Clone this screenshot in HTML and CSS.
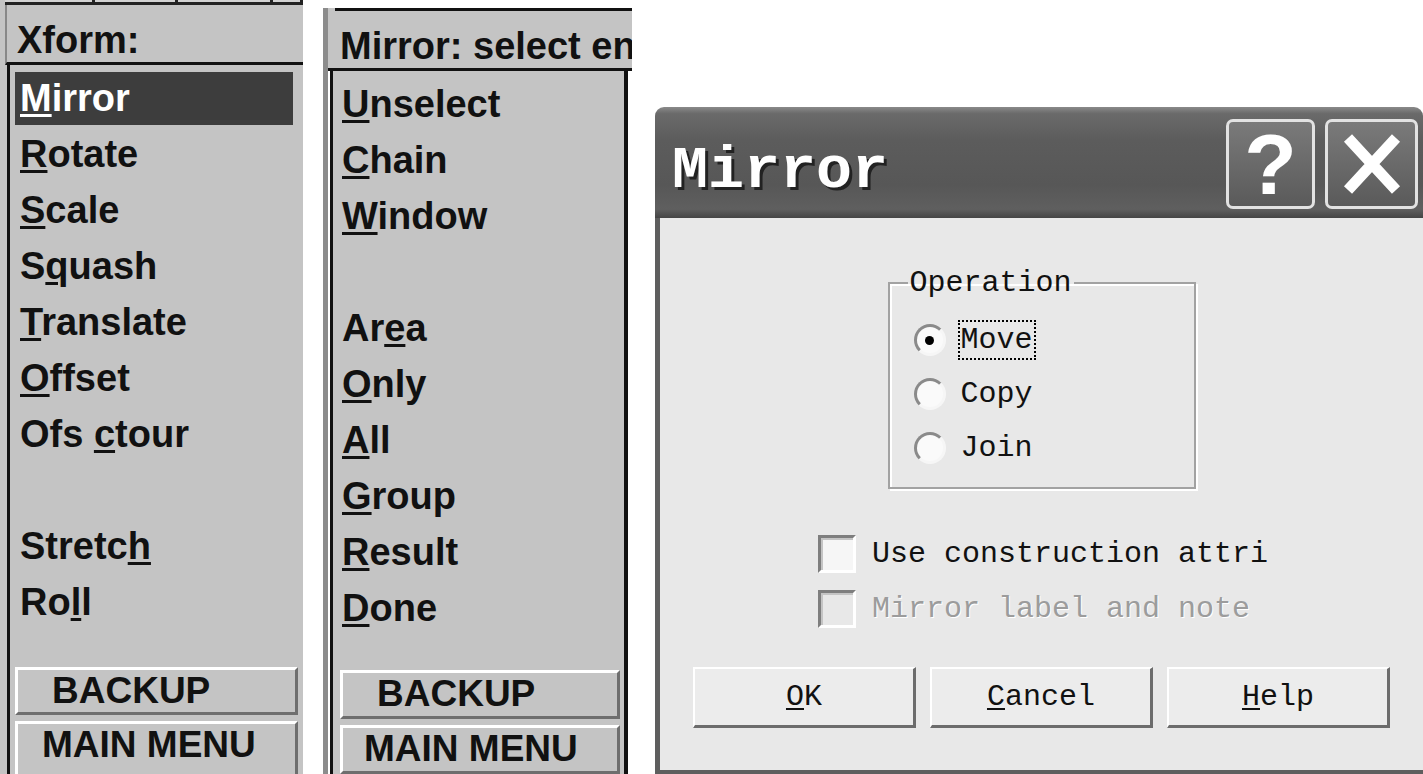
FILE: index.html
```html
<!DOCTYPE html>
<html>
<head>
  <title>Xform - Mirror</title>
  <meta charset="utf-8">
  <link rel="stylesheet" href="styles.css">
</head>
<body>
  <div id="screen">
    <!-- Xform menu -->
    <div class="panel panel-xform">
      <div class="tabs"><span></span><span></span><span></span><span></span></div>
      <div class="panel-title">Xform:</div>
      <div class="menu-box">
        <div class="item selected"><u>M</u>irror</div>
        <div class="item"><u>R</u>otate</div>
        <div class="item"><u>S</u>cale</div>
        <div class="item">S<u>q</u>uash</div>
        <div class="item"><u>T</u>ranslate</div>
        <div class="item"><u>O</u>ffset</div>
        <div class="item">Ofs <u>c</u>tour</div>
        <div class="item"></div>
        <div class="item">Stretc<u>h</u></div>
        <div class="item">Ro<u>l</u>l</div>
        <div class="menu-buttons">
          <div class="menu-btn btn-backup">BACKUP</div>
          <div class="menu-btn btn-main">MAIN MENU</div>
        </div>
      </div>
    </div>

    <!-- Mirror select menu -->
    <div class="panel panel-select">
      <div class="topline"></div>
      <div class="panel-title">Mirror: select entities</div>
      <div class="menu-box">
        <div class="item"><u>U</u>nselect</div>
        <div class="item"><u>C</u>hain</div>
        <div class="item"><u>W</u>indow</div>
        <div class="item"></div>
        <div class="item">Ar<u>e</u>a</div>
        <div class="item"><u>O</u>nly</div>
        <div class="item"><u>A</u>ll</div>
        <div class="item"><u>G</u>roup</div>
        <div class="item"><u>R</u>esult</div>
        <div class="item"><u>D</u>one</div>
        <div class="menu-buttons">
          <div class="menu-btn btn-backup">BACKUP</div>
          <div class="menu-btn btn-main">MAIN MENU</div>
        </div>
      </div>
    </div>

    <!-- Mirror dialog -->
    <div class="dialog">
      <div class="titlebar">
        <div class="title">Mirror</div>
        <div class="cap-btn cap-help">?</div>
        <div class="cap-btn cap-close">
          <svg width="60" height="62" viewBox="0 0 60 62">
            <path d="M6 5 L54 57 M54 5 L6 57" stroke="#fff" stroke-width="11" fill="none"/>
          </svg>
        </div>
      </div>
      <div class="dialog-body">
        <fieldset class="group">
          <legend>Operation</legend>
          <div class="radio-row"><span class="radio on"></span><span class="label focus">Move</span></div>
          <div class="radio-row"><span class="radio"></span><span class="label">Copy</span></div>
          <div class="radio-row"><span class="radio"></span><span class="label">Join</span></div>
        </fieldset>
        <div class="check-row"><span class="check"></span><span>Use construction attri</span></div>
        <div class="check-row disabled"><span class="check"></span><span>Mirror label and note</span></div>
        <div class="dlg-buttons">
          <div class="dlg-btn"><u>O</u>K</div>
          <div class="dlg-btn"><u>C</u>ancel</div>
          <div class="dlg-btn"><u>H</u>elp</div>
        </div>
      </div>
    </div>
  </div>
</body>
</html>
```

FILE: styles.css
```css
* {
  box-sizing: border-box;
}
body {
  margin: 0;
  background-color: #fff;
  font-family: "Liberation Sans", Arial, sans-serif;
  color: #111;
  overflow: hidden;
}
#screen {
  display: flex;
  width: 1423px;
  height: 774px;
  overflow: hidden;
}

/* left side menus */
.panel {
  flex-shrink: 0;
  display: flex;
  flex-direction: column;
  overflow: hidden;
}
.panel > * {
  flex-shrink: 0;
}
.panel-xform {
  width: 303px;
  padding-left: 5px;
  background-color: #c4c4c4;
}
.panel-select {
  width: 309px;
  margin: 8px 0 0 20px;
  border-left: 5px solid #8c8c8c;
  background-color: #fff;
}
.tabs {
  display: grid;
  grid-template-columns: 90px 83px 95px 1fr;
  height: 5px;
}
.tabs span {
  background-color: #d2d2d2;
  border-right: 3px solid #222;
  border-bottom: 3px solid #222;
}
.topline {
  height: 3px;
  background: linear-gradient(to right, #c4c4c4 7px, #111 7px);
}
.panel-title {
  height: 60px;
  padding: 14px 0 0 10px;
  font-size: 38px;
  font-weight: bold;
  line-height: 43px;
  white-space: nowrap;
  overflow: hidden;
  background-color: #c4c4c4;
  border-bottom: 3px solid #111;
}
.panel-xform .panel-title {
  border-left: 2px solid #888;
}
.panel-select .panel-title {
  padding-left: 12px;
}
.menu-box {
  flex: 1 0 auto;
  margin-left: 2px;
  padding-top: 7px;
  border-left: 3px solid #111;
  background-color: #c4c4c4;
}
.panel-select .menu-box {
  margin-right: 4px;
  border-right: 4px solid #111;
}
.item {
  height: 53px;
  margin: 0 10px 3px 5px;
  padding-left: 5px;
  font-size: 38px;
  font-weight: bold;
  line-height: 53px;
  white-space: nowrap;
}
.panel-select .item {
  padding-left: 4px;
}
.item u,
.dlg-btn u {
  text-decoration-thickness: 3px;
  text-underline-offset: 3px;
}
.item.selected {
  background-color: #3d3d3d;
  color: #fff;
}
.menu-buttons {
  margin: 38px 5px 0 5px;
}
.panel-select .menu-buttons {
  margin: 35px 4px 0 7px;
}
.menu-btn {
  height: 48px;
  border: 3px solid;
  border-color: #fff #6e6e6e #6e6e6e #fff;
  font-size: 37px;
  font-weight: bold;
  line-height: 42px;
  white-space: nowrap;
}
.panel-select .menu-btn {
  height: 49px;
}
.btn-backup {
  padding-left: 34px;
}
.btn-main {
  height: 60px;
  margin-top: 6px;
  padding-left: 24px;
}
.panel-select .btn-main {
  padding-left: 21px;
}

/* dialog */
.dialog {
  flex-shrink: 0;
  width: 768px;
  margin: 107px 0 0 23px;
  display: flex;
  flex-direction: column;
}
.titlebar {
  height: 111px;
  flex-shrink: 0;
  display: flex;
  align-items: flex-start;
  border-radius: 9px 9px 0 0;
  background: linear-gradient(to bottom, #8a8a8a 0%, #6a6a6a 6%, #5c5c5c 30%, #575757 70%, #5f5f5f 92%, #444 100%);
}
.title {
  flex: 1;
  margin: 34px 0 0 17px;
  font-family: "Liberation Mono", "Courier New", monospace;
  font-size: 60px;
  font-weight: bold;
  line-height: 60px;
  color: #fff;
  text-shadow: 3px 3px 0 #222;
}
.cap-btn {
  width: 89px;
  height: 90px;
  margin-top: 12px;
  display: flex;
  align-items: center;
  justify-content: center;
  border: 3px solid #e2e2e2;
  border-radius: 7px;
  background: linear-gradient(to bottom, #7a7a7a, #5a5a5a);
  color: #fff;
}
.cap-help {
  font-size: 86px;
  font-weight: bold;
  line-height: 1;
}
.cap-close {
  width: 93px;
  margin: 12px 5px 0 10px;
}
.dialog-body {
  flex: 1;
  display: flex;
  flex-direction: column;
  align-items: center;
  padding-top: 48px;
  background-color: #e8e8e8;
  border-left: 5px solid #5e5e5e;
  border-bottom: 4px solid #5e5e5e;
  font-family: "Liberation Mono", "Courier New", monospace;
  font-size: 30px;
  color: #111;
}
.group {
  width: 308px;
  margin: 0;
  padding: 13px 0 12px 24px;
  border: 2px solid #a2a2a2;
  box-shadow: inset 2px 2px 0 #fff, 2px 2px 0 #fff;
}
.group legend {
  margin-left: -6px;
  padding: 0 2px;
  line-height: 34px;
}
.radio-row {
  height: 54px;
  display: flex;
  align-items: center;
}
.radio {
  width: 32px;
  height: 32px;
  margin-right: 12px;
  display: flex;
  align-items: center;
  justify-content: center;
  border: 3px solid;
  border-color: #8a8a8a #f6f6f6 #f6f6f6 #8a8a8a;
  border-radius: 50%;
  background-color: #fafafa;
}
.radio.on::after {
  content: "";
  width: 9px;
  height: 9px;
  border-radius: 50%;
  background-color: #000;
}
.label {
  padding: 0 1px;
  border: 2px dotted transparent;
  line-height: 36px;
}
.label.focus {
  border-color: #000;
}
.check-row {
  align-self: flex-start;
  display: flex;
  align-items: center;
  height: 38px;
  margin: 46px 0 0 158px;
  white-space: nowrap;
}
.check-row.disabled {
  margin-top: 17px;
  color: #9c9c9c;
  text-shadow: 1px 1px 0 #fff;
}
.check {
  width: 38px;
  height: 38px;
  margin-right: 16px;
  border: 3px solid;
  border-color: #7e7e7e #fff #fff #7e7e7e;
  box-shadow: inset 2px 2px 0 #c4c4c4;
  background-color: #f6f6f6;
}
.disabled .check {
  background-color: #e8e8e8;
}
.dlg-buttons {
  display: flex;
  gap: 14px;
  margin-top: 39px;
}
.dlg-btn {
  width: 223px;
  height: 61px;
  display: flex;
  align-items: center;
  justify-content: center;
  background-color: #ececec;
  border: 2px solid;
  border-color: #fff #6c6c6c #6c6c6c #fff;
  border-right-width: 3px;
  border-bottom-width: 3px;
}
.dlg-btn u {
  text-decoration-thickness: 2px;
}
```
